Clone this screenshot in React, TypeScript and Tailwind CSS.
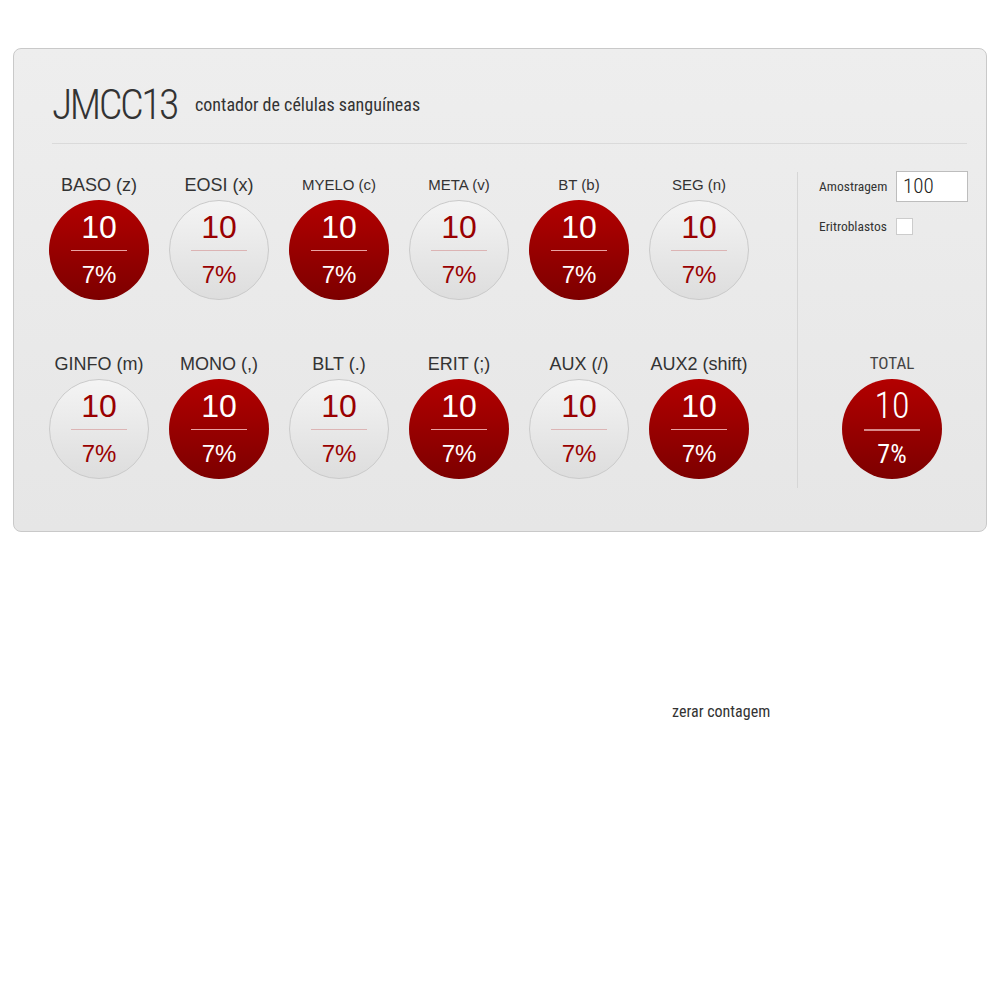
import React from 'react';

type Cell = { label: string; filled: boolean; small?: boolean };

const narrow = 'font-["Roboto",sans-serif] [font-stretch:75%]';
const arial = 'font-["Liberation_Sans",Arial,sans-serif]';

const rowOne: Cell[] = [
  { label: 'BASO (z)', filled: true },
  { label: 'EOSI (x)', filled: false },
  { label: 'MYELO (c)', filled: true, small: true },
  { label: 'META (v)', filled: false, small: true },
  { label: 'BT (b)', filled: true, small: true },
  { label: 'SEG (n)', filled: false, small: true },
];

const rowTwo: Cell[] = [
  { label: 'GINFO (m)', filled: false },
  { label: 'MONO (,)', filled: true },
  { label: 'BLT (.)', filled: false },
  { label: 'ERIT (;)', filled: true },
  { label: 'AUX (/)', filled: false },
  { label: 'AUX2 (shift)', filled: true },
];

function Counter({ filled, count, percent }: { filled: boolean; count: number; percent: string }) {
  return (
    <div
      className={
        filled
          ? 'w-[100px] h-[100px] rounded-full bg-gradient-to-b from-[#b30000] to-[#7d0000] text-white flex flex-col items-center pt-[11px]'
          : 'w-[100px] h-[100px] rounded-full border border-[#cacaca] bg-gradient-to-b from-[#f4f4f4] to-[#dddddd] text-[#990000] flex flex-col items-center pt-[10px]'
      }
    >
      <span className={`${arial} text-[32px] leading-[32px]`}>{count}</span>
      <span className={filled ? 'mt-[7px] h-px w-[56px] bg-[#e9a3a3]' : 'mt-[7px] h-px w-[56px] bg-[#dcb4b4]'} />
      <span className={`${arial} mt-[12px] text-[24px] leading-[24px]`}>{percent}</span>
    </div>
  );
}

function CounterCell({ cell }: { cell: Cell }) {
  return (
    <div className="flex flex-col items-center">
      <div
        className={`${arial} h-[30px] flex items-center text-[#333333] ${cell.small ? 'text-[15px]' : 'text-[18px]'}`}
      >
        {cell.label}
      </div>
      <Counter filled={cell.filled} count={10} percent="7%" />
    </div>
  );
}

export default function App() {
  return (
    <div className="min-h-[1000px] bg-white">
      <div className="ml-[13px] pt-[48px]">
        <div className="w-[974px] h-[484px] rounded-[8px] border border-[#c9c9c9] bg-gradient-to-b from-[#eeeeee] to-[#e6e6e6]">
          <div className="pl-[38px] pr-[19px] pt-[34px]">
            <div className="flex items-center">
              <h1 className={`${narrow} font-light tracking-[-2.5px] text-[42px] leading-[43px] text-[#333333]`}>JMCC13</h1>
              <span className={`${narrow} ml-[18px] text-[18px] text-[#333333]`}>contador de células sanguíneas</span>
            </div>
            <div className="mt-[17px] h-px bg-[#dadada]" />
          </div>

          <div className="mt-[26px] flex">
            <div className="ml-[25px] flex flex-col gap-[49px]">
              <div className="grid grid-cols-[repeat(6,120px)]">
                {rowOne.map((c) => (
                  <CounterCell key={c.label} cell={c} />
                ))}
              </div>
              <div className="grid grid-cols-[repeat(6,120px)]">
                {rowTwo.map((c) => (
                  <CounterCell key={c.label} cell={c} />
                ))}
              </div>
            </div>

            <div className="ml-[38px] mt-[2px] h-[316px] w-px bg-[#d6d6d6]" />

            <div className="flex-1 flex flex-col">
              <div className="h-[179px] pl-[21px]">
                <div className="mt-[1px] flex items-center h-[31px]">
                  <span className={`${narrow} w-[77px] text-[13.5px] text-[#333333]`}>Amostragem</span>
                  <input
                    type="text"
                    defaultValue="100"
                    className={`${narrow} font-light w-[72px] h-[31px] border border-[#bdbdbd] bg-white pl-[6px] text-[21px] text-[#222222] outline-none`}
                  />
                </div>
                <div className="mt-[16px] flex items-center h-[17px]">
                  <span className={`${narrow} w-[77px] text-[13.5px] text-[#333333]`}>Eritroblastos</span>
                  <span className="w-[17px] h-[17px] border border-[#cccccc] bg-white" />
                </div>
              </div>
              <div className="flex flex-col items-center">
                <div className={`${narrow} h-[30px] flex items-center text-[17px] text-[#444444]`}>TOTAL</div>
                <div className="w-[100px] h-[100px] rounded-full bg-gradient-to-b from-[#b30000] to-[#7d0000] text-white flex flex-col items-center pt-[11px]">
                  <span className={`${narrow} font-light text-[36px] leading-[32px]`}>10</span>
                  <span className="mt-[7px] h-[2px] w-[56px] bg-[#d88a8a]" />
                  <span className={`${narrow} mt-[11px] text-[26px] leading-[24px]`}>7%</span>
                </div>
              </div>
            </div>
          </div>
        </div>
      </div>
      <div className={`${narrow} ml-[672px] mt-[168px] text-[16px] text-[#333333]`}>zerar contagem</div>
    </div>
  );
}
